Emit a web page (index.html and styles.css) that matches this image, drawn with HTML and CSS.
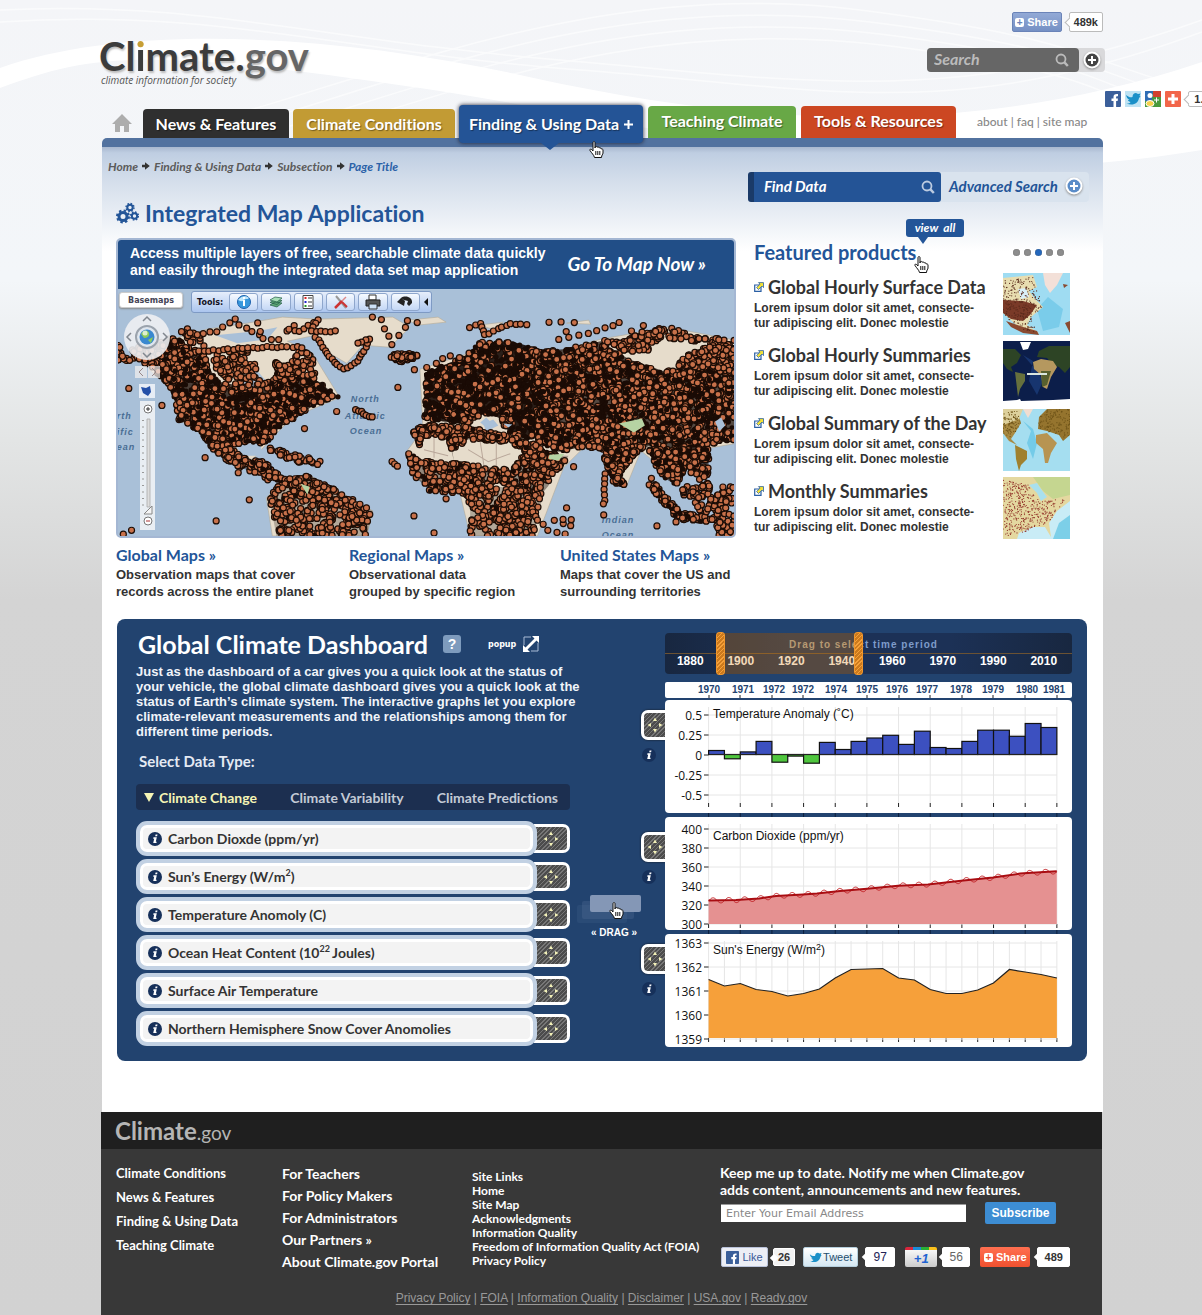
FILE: index.html
```html
<!DOCTYPE html>
<html lang="en">
<head>
<meta charset="utf-8">
<meta name="viewport" content="width=device-width, initial-scale=1">
<title>Climate.gov - Integrated Map Application</title>
<link rel="stylesheet" href="styles.css">
</head>
<body>
<svg class="defs" width="0" height="0" aria-hidden="true">
  <defs>
    <symbol id="hand" viewBox="0 0 15 17"><path d="M4 1.5c0-1.2 2-1.2 2 0V7l.4-1.3c.6-.6 1.7-.3 1.7.6.7-.7 1.9-.3 2 .6.8-.5 2-.1 2 1.1.8-.4 1.9 0 1.9 1v3c0 1.5-1.5 2-1.5 4.500H5.500C5 14 2.500 12 1 9.500c-.6-1.200.8-1.900 1.700-.9L4 10z" fill="#fff" stroke="#111" stroke-width="1"/><path d="M6.800 10v4M8.800 10v4M10.800 10v4" stroke="#111" fill="none"/></symbol>
    <symbol id="lens" viewBox="0 0 14 14"><circle cx="6" cy="6" r="4.500" fill="none" stroke="currentColor" stroke-width="1.800"/><path d="M9.200 9.200 12.800 13" stroke="currentColor" stroke-width="2.500"/></symbol>
    <symbol id="plus-ring" viewBox="0 0 20 20"><circle cx="10" cy="10" r="8.500" fill="#fff"/><circle cx="10" cy="10" r="6.500" fill="currentColor"/><path d="M10 6v8M6 10h8" stroke="#fff" stroke-width="2"/></symbol>
    <symbol id="ext" viewBox="0 0 10 10"><path d="M.7 3h6.300v6.300H.7z" fill="#fff" stroke="#2a5fa4" stroke-width="1.200"/><path d="M4.500.6h5v5L8 4.100 4.500 7.500 2.600 5.600 6 2.100z" fill="#f4e236" stroke="#2a5fa4" stroke-width=".8"/></symbol>
    <symbol id="move" viewBox="0 0 18 18"><path d="M9 1.500 11 5H7zM9 16.500 7 13h4zM1.500 9 5 7v4zM16.500 9 13 11V7z" fill="#f3f1b8"/></symbol>
    <symbol id="crumb" viewBox="0 0 8 8"><path d="M0 2.800h3V.3L7.800 4 3 7.700V5.200H0z" fill="#333"/></symbol>
    <symbol id="info" viewBox="0 0 14 14"><circle cx="7" cy="7" r="7" fill="#16305a"/><path d="M7.600 2.500h1.900l-.4 1.800H7.200zM5.500 5.200h3.300l-1 4.500h.9l-.3 1.400H5.200l1-4.400h-1z" fill="#fff"/></symbol>
    <symbol id="fb" viewBox="0 0 16 16"><rect width="16" height="16" rx="1" fill="#3b5f9a"/><path d="M8.500 16v-6H6.500V7.500h2V6c0-2.200 1.200-3.300 4.500-3v2.300c-1.700-.1-1.900.2-1.900 1.200v1h1.900L12.600 10h-1.500v6z" fill="#fff"/></symbol>
    <symbol id="bird" viewBox="0 0 16 16"><path d="M1 4c3 2.500 5 2.500 6.500 2C7.500 3.500 9 2 11 2l2 1 2.500-.5L14.500 5l1 .5L14 7c-.5 5-6 8.500-12.500 5.500C4 12.500 5 12 5.500 11 3.500 10.500 3 9.500 3 9h1.500C2.500 8 1.500 6 1 4z" fill="#1a90c8"/></symbol>
  </defs>
</svg>
<svg class="waves" viewBox="0 0 1202 220" preserveAspectRatio="none" aria-hidden="true">
  <path d="M0 68C130 22 340 35 520 75S940 150 1202 62V150C900 200 700 130 420 88S90 55 0 88z" fill="#fff"/>
  <g fill="none" stroke="#fff" stroke-width="1.500" opacity=".6">
    <path d="M0 10C200 0 320 40 560 60S950 110 1202 20"/><path d="M0 22C220 8 340 52 580 70S950 125 1202 32"/>
    <path d="M250 110C420 60 620-20 860 10S1100 70 1202 90"/><path d="M270 118C440 66 630-8 870 22S1100 80 1202 102"/>
    <path d="M290 126C460 74 640 4 880 34S1100 92 1202 116"/><path d="M310 134C480 84 650 16 890 46S1100 104 1202 130"/>
  </g>
</svg>

<div class="page">
  <header class="masthead">
    <div class="masthead-top">
      <a class="logo" href="#"><span class="logo-name">Cl<span class="logo-i">i</span>mate.<span class="logo-gov">gov</span></span><span class="tagline">climate information for society</span></a>
      <div class="tools">
        <div class="share-row">
          <button class="share-btn" type="button"><span class="plus-box">+</span>Share</button>
          <span class="count">489k</span>
        </div>
        <form class="site-search">
          <input type="text" placeholder="Search" aria-label="Search the site">
          <button class="lens-btn" type="submit" aria-label="Search"><svg width="14" height="14"><use href="#lens"/></svg></button>
          <button class="more-btn" type="button" aria-label="More options"><svg width="20" height="20"><use href="#plus-ring"/></svg></button>
        </form>
      </div>
      <div class="float-share">
        <a href="#" aria-label="Facebook"><svg width="16" height="16"><use href="#fb"/></svg></a>
        <a href="#" aria-label="Twitter" class="sq-tw"><svg width="16" height="16"><use href="#bird"/></svg></a>
        <a href="#" aria-label="Google"><svg width="16" height="16" viewBox="0 0 16 16"><rect width="16" height="16" fill="#4a9a3c"/><path d="M8 0h8v6H8z" fill="#d2402e"/><path d="M0 0h8l-1 10H0z" fill="#2f6db5"/><circle cx="5" cy="4.500" r="2.500" fill="#fff"/><ellipse cx="5" cy="12.500" rx="4" ry="3" fill="#f7d14a" stroke="#fff"/><path d="M9 9h5M11.500 6.500v5" stroke="#fff"/></svg></a>
        <a href="#" aria-label="Share"><svg width="16" height="16" viewBox="0 0 16 16"><rect width="16" height="16" rx="1" fill="#f2664a"/><path d="M8 3v10M3 8h10" stroke="#fff" stroke-width="3"/></svg></a>
        <span class="count">1.2k</span>
      </div>
    </div>
    <nav class="nav" aria-label="Main">
      <a class="home" href="#" aria-label="Home"><svg width="20" height="18" viewBox="0 0 20 18"><path d="M10 0 20 10h-3v8h-5v-6H8v6H3v-8H0z" fill="#adadad"/></svg></a>
      <a class="tab tab-news" href="#">News &amp; Features</a>
      <a class="tab tab-cond" href="#">Climate Conditions</a>
      <a class="tab tab-data" href="#">Finding &amp; Using Data <svg width="9" height="9" viewBox="0 0 9 9"><path d="M4.500 0v9M0 4.500h9" stroke="#fff" stroke-width="2"/></svg><svg class="pointer" width="15" height="17"><use href="#hand"/></svg></a>
      <a class="tab tab-teach" href="#">Teaching Climate</a>
      <a class="tab tab-tools" href="#">Tools &amp; Resources</a>
      <span class="mini"><a href="#">about</a> | <a href="#">faq</a> | <a href="#">site map</a></span>
    </nav>
  </header>

  <main class="content">
    <div class="columns">
      <section class="map-col">
        <nav class="crumbs" aria-label="Breadcrumb">
          <a href="#">Home</a><svg width="8" height="8"><use href="#crumb"/></svg><a href="#">Finding &amp; Using Data</a><svg width="8" height="8"><use href="#crumb"/></svg><a href="#">Subsection</a><svg width="8" height="8"><use href="#crumb"/></svg><a class="here" href="#">Page Title</a>
        </nav>
        <h1><svg width="23" height="22" viewBox="0 0 23 22" fill="none" stroke="#235598"><circle cx="7" cy="14.500" r="4" stroke-width="3"/><circle cx="7" cy="14.500" r="6" stroke-width="2" stroke-dasharray="2.400 2.300"/><circle cx="14" cy="5.500" r="2.700" stroke-width="2"/><circle cx="14" cy="5.500" r="4" stroke-width="1.400" stroke-dasharray="1.600 1.550"/><circle cx="18.500" cy="14" r="2.700" stroke-width="2"/><circle cx="18.500" cy="14" r="4" stroke-width="1.400" stroke-dasharray="1.600 1.550"/></svg>Integrated Map Application</h1>
        <div class="map-card">
          <div class="map-banner">
            <p>Access multiple layers of free, searchable climate data quickly and easily through the integrated data set map application</p>
            <a href="#">Go To Map Now »</a>
          </div>
          <div class="map-view">
            <svg class="world" viewBox="0 0 616 246" preserveAspectRatio="xMidYMid slice" role="img" aria-label="World map of climate stations">
              <rect width="616" height="246" fill="#a9c0d8"/>
              <g fill="#e6dccb" stroke="#b3aa98" stroke-width=".6">
                <path d="M55 50 90 40 130 34 165 28 200 30 275 28 292 38 272 58 245 56 229 74 212 64 198 46 170 52 195 64 222 108 175 128 155 148 135 170 100 155 62 130 55 100 32 80z"/>
                <path d="M149 208 162 194 189 184 215 198 255 221 249 246H155z"/>
                <path d="M302 80 362 60 440 62 482 50 549 38 616 51V154L592 158 555 188 522 161 507 198 484 161 465 158 445 178 419 246H352L342 204 300 190 290 160 305 140z"/>
                <path d="M290 31 320 28 328 33 300 36zM448 34 470 31 472 35zM360 36 385 33 375 40z"/>
              </g>
              <path d="M120 90 137 78 149 92 140 104 124 96zM118 156 142 152 146 166 126 166zM365 134 375 130 380 136 368 142zM98 46 140 42 160 38 150 50 120 54z" fill="#a9c0d8"/>
              <path d="M306 160 330 166M316 146V168M350 160 370 172 392 164M362 152 366 178M378 150V180" stroke="#b9a79a" fill="none"/>
              <g class="sea-names">
                <text x="233" y="113">North</text><text x="227" y="129">Atlantic</text><text x="232" y="144">Ocean</text>
                <text x="0" y="129">rth</text><text x="0" y="145">ific</text><text x="0" y="160">ean</text>
                <text x="483" y="233">Indian</text><text x="483" y="248">Ocean</text>
              </g>
              <g id="stations">
                <polygon data-shade=".75" data-dots="1300" points="32,56 55,46 84,64 100,92 140,100 158,88 160,74 182,84 200,92 222,108 199,114 178,128 162,138 155,146 150,154 130,152 112,156 96,150 62,130 55,100 40,84"/>
                <polygon data-dots="60" points="0,54 20,56 50,60 50,80 36,78 20,70 0,74"/>
                <polygon data-dots="110" points="62,40 80,38 90,62 130,58 150,96 128,100 110,92 84,66"/>
                <polygon data-dots="60" points="155,70 172,74 182,60 195,66 200,90 180,86 160,84"/>
                <polygon data-shade=".4" data-dots="200" points="79,138 108,150 125,168 150,172 160,184 186,190 184,196 150,190 135,182 112,174 96,160"/>
                <polygon data-dots="40" points="142,156 170,162 206,172 198,176 160,168"/>
                <polygon data-shade=".25" data-dots="330" points="152,208 162,194 189,184 215,198 255,221 249,246 159,246"/>
                <polygon data-shade=".5" data-dots="60" points="272,66 285,63 300,66 290,73 276,72"/>
                <polygon data-shade=".9" data-dots="1100" points="306,84 345,68 362,53 392,52 430,62 440,90 436,120 430,146 410,150 392,144 380,128 366,124 350,134 325,132 305,128 308,110"/>
                <polygon data-shade=".7" data-dots="2100" points="415,62 445,60 469,55 482,52 510,70 545,82 600,78 616,84 616,150 592,154 580,160 555,160 530,156 522,161 505,164 484,160 465,157 440,162 420,152"/>
                <polygon data-dots="130" points="482,50 502,53 522,42 549,38 575,46 616,51 616,60 590,56 565,50 540,50 528,62 510,64"/>
                <polygon data-dots="140" points="555,76 580,58 616,58 616,86 590,80"/>
                <polygon data-shade=".4" data-dots="190" points="294,142 308,134 340,136 392,146 410,152 408,160 390,152 350,150 334,160 336,172 330,148 306,146 302,156"/>
                <polygon data-shade=".4" data-dots="430" points="290,162 300,170 340,174 395,180 404,166 440,164 430,196 420,208 400,206 380,190 352,214 342,204 312,201 294,184"/>
                <polygon data-shade=".25" data-dots="230" points="348,200 372,196 408,200 424,208 419,226 415,246 352,246 352,214"/>
                <polygon data-shade=".3" data-dots="100" points="398,150 420,154 432,166 450,166 444,176 434,186 414,176"/>
                <polygon data-shade=".5" data-dots="160" points="484,158 520,160 502,182 507,196 496,194 488,180"/>
                <polygon data-shade=".6" data-dots="280" points="530,160 590,158 589,186 572,184 566,176 558,196 545,188 536,174"/>
                <polygon data-shade=".5" data-dots="100" points="532,188 544,202 562,222 588,226 588,232 560,230 544,212 530,196"/>
                <polygon data-dots="120" points="560,200 585,184 592,198 616,196 616,246 600,246 590,228 575,216"/>
                <polyline data-step="5" points="82,62 150,58 185,58"/>
                <polyline data-step="8" points="65,42 80,46 100,42 118,30 122,36 142,46"/>
                <polyline data-step="10" points="140,34 146,50 162,50 170,42 176,36"/>
                <polyline data-step="4" points="198,48 206,58 214,70 226,80 240,72 248,58 252,50 240,54"/>
                <polyline data-step="5" points="172,40 182,42 200,30 194,42 218,42"/>
                <polyline data-step="9" points="255,28 264,31 274,55 281,46 288,38 290,31 300,34"/>
                <polyline data-step="5" points="352,38 362,34 366,46 380,40 392,35 408,35"/>
                <polyline data-step="11" points="430,33 455,34 440,50 460,46 478,42 494,36 500,33 512,42 525,36"/>
                <polyline data-step="3" points="238,120 246,124 255,128"/>
                <polyline data-step="5" points="486,184 486,210 484,214"/>
                <polyline data-step="9" points="350,70 332,66 318,74 308,78 296,80"/>
                <polyline data-step="6" points="600,140 604,128 616,120"/>
                <polyline data-step="7" points="419,230 430,240 446,244 452,236 436,230 452,230"/>
                <polyline data-step="4" points="274,172 280,176"/>
                <polyline data-step="40" points="12,99 45,116 88,168 121,183 132,210 99,231 187,139 219,122 280,98 296,226 328,209 316,243 448,218 455,177 485,225 538,236 557,232"/>
                <polyline data-step="6" points="6,244 14,240"/>
              </g>
              <path d="M500 134 523 129 526 136 515 143zM431 165 446 164 440 171 430 169zM183 194 192 197 190 205z" fill="#b6d3a3"/>
              <path d="M362 133 368 128 374 134 368 138zM385 134 394 135 390 138zM596 132 602 128 606 136 600 142z" fill="#a9c0d8"/>
            </svg>
            <button class="basemaps" type="button">Basemaps</button>
            <div class="map-tools">
              <span>Tools:</span>
              <button type="button" aria-label="Identify"><svg width="16" height="16" viewBox="0 0 16 16"><circle cx="8" cy="8" r="6.500" fill="#3797dc" stroke="#1d61ad"/><path d="M2 6c3-4 8-5 11-2-2 2-3 0-5 2s-4 1-6 0z" fill="#bfe6fa"/><path d="M8 6v6M8 3v2" stroke="#fff" stroke-width="2"/></svg></button>
              <button type="button" aria-label="Layers"><svg width="16" height="16" viewBox="0 0 16 16" fill="#5fa777" stroke="#235b45" stroke-width=".7"><path d="m2 11 5-3 7 1-5 4zM2 8.500l5-3 7 1-5 4z"/><path d="m2 6 5-3 7 1-5 4z" fill="#a4ddb4"/></svg></button>
              <button type="button" aria-label="Legend"><svg width="16" height="16" viewBox="0 0 16 16"><path d="M3 1.500h10v13H3z" fill="#fff" stroke="#444"/><path d="M4.500 3h2v2h-2z" fill="#d22"/><path d="M4.500 7h2v2h-2z" fill="#22c"/><path d="M4.500 11h2v2h-2z" fill="#292"/><path d="M8 4h4M8 8h4M8 12h4" stroke="#333"/></svg></button>
              <button type="button" aria-label="Settings"><svg width="16" height="16" viewBox="0 0 16 16" fill="none"><path d="M3 2l10 12" stroke="#999" stroke-width="2"/><path d="M2 14 9 7" stroke="#c33" stroke-width="2.500"/><path d="m9 7 4-4" stroke="#d88" stroke-width="1.500"/><path d="m9 8 5 5" stroke="#c33" stroke-width="2"/></svg></button>
              <button type="button" aria-label="Print"><svg width="16" height="16" viewBox="0 0 16 16"><path d="M4 1h7v5H4z" fill="#fff" stroke="#333"/><path d="M1 6h14v6H1z" fill="#555" stroke="#222"/><path d="M4 10h8v5H4z" fill="#cde0f5" stroke="#333"/></svg></button>
              <button type="button" aria-label="Find"><svg width="18" height="14" viewBox="0 0 18 14"><path d="M1 7 5 3l4 3-1 5zM5 3c4-3 12-1 11 5l-3 3-2-2 1-3-4-1z" fill="#222"/></svg></button>
              <button class="fold" type="button" aria-label="Collapse"><svg width="4" height="8" viewBox="0 0 4 8"><path d="M4 0v8L0 4z" fill="#111"/></svg></button>
            </div>
            <svg class="map-nav" width="56" height="216" viewBox="0 0 56 216" aria-hidden="true">
              <circle cx="26" cy="23" r="23" fill="#eef0f3" opacity=".9"/><circle cx="26" cy="23" r="11" fill="#dfe6ee" stroke="#9ba3ad" stroke-width="2"/>
              <circle cx="26" cy="23" r="7.500" fill="#3a88cf"/><path d="M20 20c3-5 7-4 8-1s-2 5-5 5zM27 26l5-3-2 6z" fill="#8dcb5a"/><circle cx="24" cy="19" r="2.500" fill="#fff" opacity=".7"/>
              <g fill="none" stroke="#81878f" stroke-width="1.500"><path d="m22 7 4-4 4 4M22 39l4 4 4-4M10 19l-4 4 4 4M42 19l4 4-4 4"/></g>
              <path d="M14 52h12v12H14zM27 52h12v12H27z" fill="#f5f1f0" opacity=".7"/><path d="m22 54-4 4 4 4M31 54l4 4-4 4" fill="none" stroke="#988"/>
              <path d="M18 70h16v14H18z" fill="#e7edf5"/><path d="m20 73 5 1 4-2 1 6-3 4-5-3z" fill="#2450a8"/>
              <rect x="19" y="87" width="15" height="129" fill="#eff2f5" opacity=".92"/>
              <circle cx="27" cy="95" r="4" fill="#fff" stroke="#777"/><path d="M27 93v4M25 95h4" stroke="#333"/>
              <path d="M26 105h3v88h-3z" fill="#ddd" stroke="#aaa" stroke-width=".8"/><path d="M22 106v86" stroke="#999" stroke-dasharray="1 5.500" stroke-width="2"/>
              <path d="M31 192v8h-8z" fill="#f5f5f5" stroke="#888"/><circle cx="27" cy="207" r="4" fill="#fff" stroke="#777"/><path d="M25 207h4" stroke="#a33"/>
            </svg>
          </div>
        </div>
        <div class="map-links">
          <div><h3><a href="#">Global Maps »</a></h3><p>Observation maps that cover<br>records across the entire planet</p></div>
          <div><h3><a href="#">Regional Maps »</a></h3><p>Observational data<br>grouped by specific region</p></div>
          <div><h3><a href="#">United States Maps »</a></h3><p>Maps that cover the US and<br>surrounding territories</p></div>
        </div>
      </section>

      <aside class="side-col">
        <form class="find">
          <input type="text" placeholder="Find Data" aria-label="Find data">
          <button class="lens-btn" type="submit" aria-label="Find"><svg width="14" height="14"><use href="#lens"/></svg></button>
          <a href="#">Advanced Search<svg width="20" height="20"><use href="#plus-ring"/></svg></a>
        </form>
        <section class="featured">
          <div class="featured-head">
            <h2>Featured products</h2>
            <a class="view-all" href="#">view&nbsp; all</a>
            <svg class="pointer" width="15" height="17"><use href="#hand"/></svg>
            <div class="pager"><i></i><i></i><i class="on"></i><i></i><i></i></div>
          </div>
          <article class="product">
            <div><h3><svg width="10" height="10"><use href="#ext"/></svg><a href="#">Global Hourly Surface Data</a></h3><p>Lorem ipsum dolor sit amet, consecte-<br>tur adipiscing elit. Donec molestie</p></div>
            <svg class="thumb" width="67" height="62" viewBox="0 0 67 62"><rect width="67" height="62" fill="#9fdcf2"/><path d="M34 36 45 24 60 36 56 54 40 58z" fill="#7accea"/><path d="M0 5 30 2 34 14 26 18 32 26 40 34 28 44 24 52 36 60 20 58 0 40z" fill="#e8ddb0"/><path d="M40 0h20L54 12l-7 8-5-8z" fill="#f3e0d8"/><path d="M15 16l8-1 3 9-8 2z" fill="#d9eff8"/><path d="M0 27 20 28 34 32 27 42 20 48 8 46 0 40z" fill="#7a3a28"/><path d="M3 48 20 54 34 58 36 62 20 60 8 54zM60 11l5 1-4 3zM62 50l5-2v12z" fill="#8a4a30"/><g data-color="#5a2a1c"><polygon data-tiny="1" data-dots="260" points="0,8 30,4 40,34 28,44 36,60 18,56 0,42"/></g></svg>
          </article>
          <article class="product">
            <div><h3><svg width="10" height="10"><use href="#ext"/></svg><a href="#">Global Hourly Summaries</a></h3><p>Lorem ipsum dolor sit amet, consecte-<br>tur adipiscing elit. Donec molestie</p></div>
            <svg class="thumb" width="67" height="62" viewBox="0 0 67 62"><rect width="67" height="62" fill="#0c1e4a"/><path d="M20 14 30 20 26 40 34 54 40 40 34 30z" fill="#17356f"/><path d="M0 8 12 8 18 14 14 22 8 26 10 31 4 28 0 22zM36 10 46 5 67 5V26L62 32 56 26 50 24 44 17 34 16z" fill="#2d4425"/><path d="M17 1h11l-3 7-5 1z" fill="#fff"/><path d="M30 21 38 18 50 20 54 26 48 36 44 48 40 46 38 34 31 28z" fill="#b5985f"/><path d="M38 30h10l-4 14-5 2z" fill="#58602f"/><path d="M12 31 22 33 22 40 17 48 15 56z" fill="#66703d"/><path d="M0 62V60L14 59l3-1 1 2 32-1 17-1v4z" fill="#fff"/><path d="M24 32h20v2H24z" fill="#dce8e0"/></svg>
          </article>
          <article class="product">
            <div><h3><svg width="10" height="10"><use href="#ext"/></svg><a href="#">Global Summary of the Day</a></h3><p>Lorem ipsum dolor sit amet, consecte-<br>tur adipiscing elit. Donec molestie</p></div>
            <svg class="thumb" width="67" height="62" viewBox="0 0 67 62"><rect width="67" height="62" fill="#a5def0"/><path d="M20 12 28 22 24 34 30 50 34 34 30 20z" fill="#74cbe8"/><path d="M0 2 14 2 18 14 12 24 8 30 14 36 6 32 0 24z" fill="#a88a42"/><path d="M0 0h20l-4 10-16 6z" fill="#ddd09c"/><path d="M20 0h10l-5 9z" fill="#f1ddd0"/><path d="M36 8 44 0 67 0V26L60 32 56 26 44 22 35 20z" fill="#95742e"/><path d="M33 26 44 24 54 34 48 44 45 54 42 54 40 40 33 34z" fill="#b79452"/><path d="M12 36 24 42 24 50 18 56 16 62 13 50z" fill="#a0812f"/><g data-color="#6e5318"><polygon data-tiny="1" data-dots="130" points="36,8 44,0 67,0 67,26 60,32 56,26 35,20"/><polygon data-tiny="1" data-dots="90" points="0,2 14,2 18,14 8,30 0,24"/></g></svg>
          </article>
          <article class="product">
            <div><h3><svg width="10" height="10"><use href="#ext"/></svg><a href="#">Monthly Summaries</a></h3><p>Lorem ipsum dolor sit amet, consecte-<br>tur adipiscing elit. Donec molestie</p></div>
            <svg class="thumb" width="67" height="62" viewBox="0 0 67 62"><rect width="67" height="62" fill="#e4d8a0"/><path d="M30 0H67V18L50 22 40 14z" fill="#c5d690"/><path d="M67 24 54 34 46 46 48 60 42 50 30 50 16 56 14 62H67z" fill="#c9ecf6"/><path d="M67 38 56 46 50 62H67z" fill="#7ccfe8"/><path d="M26 8 34 6 38 12 44 20 38 24 34 16z" fill="#a9e0ee"/><g data-color="#94372c"><polygon data-tiny="1" data-dots="420" points="0,2 26,8 36,24 62,22 46,46 30,50 14,60 0,58"/></g></svg>
          </article>
        </section>
      </aside>
    </div>

    <section class="dash">
      <div class="dash-left">
        <div class="dash-title"><h2>Global Climate Dashboard</h2><button class="help" type="button" aria-label="Help">?</button><a class="popup" href="#">popup<svg width="16" height="16" viewBox="0 0 16 16"><path d="M1 9V1h7M15 7v8H8" fill="none" stroke="#a9bcd6"/><path d="M9 0h7v7l-2.500-2.500-9 9L7 16H0V9l2.500 2.500 9-9z" fill="#fff"/></svg></a></div>
        <p class="dash-text">Just as the dashboard of a car gives you a quick look at the status of<br>your vehicle, the global climate dashboard gives you a quick look at the<br>status of Earth’s climate system. The interactive graphs let you explore<br>climate-relevant measurements and the relationships among them for<br>different time periods.</p>
        <h3>Select Data Type:</h3>
        <div class="types"><button class="on" type="button">Climate Change</button><button type="button">Climate Variability</button><button type="button">Climate Predictions</button></div>
        <ul class="data-list">
          <li><div class="pill"><svg width="14" height="14"><use href="#info"/></svg>Carbon Dioxde (ppm/yr)</div><button type="button" aria-label="Move"><svg width="18" height="18"><use href="#move"/></svg></button></li>
          <li><div class="pill"><svg width="14" height="14"><use href="#info"/></svg><span>Sun’s Energy (W/m<sup>2</sup>)</span></div><button type="button" aria-label="Move"><svg width="18" height="18"><use href="#move"/></svg></button></li>
          <li><div class="pill"><svg width="14" height="14"><use href="#info"/></svg>Temperature Anomoly (C)</div><button type="button" aria-label="Move"><svg width="18" height="18"><use href="#move"/></svg></button></li>
          <li><div class="pill"><svg width="14" height="14"><use href="#info"/></svg><span>Ocean Heat Content (10<sup>22 </sup>Joules)</span></div><button type="button" aria-label="Move"><svg width="18" height="18"><use href="#move"/></svg></button></li>
          <li><div class="pill"><svg width="14" height="14"><use href="#info"/></svg>Surface Air Temperature</div><button type="button" aria-label="Move"><svg width="18" height="18"><use href="#move"/></svg></button></li>
          <li><div class="pill"><svg width="14" height="14"><use href="#info"/></svg>Northern Hemisphere Snow Cover Anomolies</div><button type="button" aria-label="Move"><svg width="18" height="18"><use href="#move"/></svg></button></li>
        </ul>
      </div>
      <div class="dash-mid">
        <svg width="64" height="28" viewBox="0 0 64 28" aria-hidden="true"><rect x="0" y="10" width="50" height="18" rx="2" fill="#5f789f" opacity=".15"/><rect x="5" y="6" width="52" height="18" rx="2" fill="#5f789f" opacity=".25"/><rect x="13" y="0" width="51" height="17" rx="2" fill="#8497b6"/><use href="#hand" x="32" y="7" width="15" height="17"/></svg>
        <span>« DRAG »</span>
      </div>
      <div class="dash-right">
        <div class="timeline">
          <span class="hint"><b>Drag to sele</b>ct time period</span>
          <div class="decades"><span>1880</span><span>1900</span><span>1920</span><span>1940</span><span>1960</span><span>1970</span><span>1990</span><span>2010</span></div>
          <div class="range"></div>
          <input type="range" min="0" max="1000" value="128" aria-label="Start year">
          <input type="range" min="0" max="1000" value="475" aria-label="End year">
        </div>
        <svg class="axis" viewBox="0 0 407 16"><rect width="407" height="16" rx="2" fill="#fff"/><g><text x="44" y="11">1970</text><text x="78" y="11">1971</text><text x="109" y="11">1972</text><text x="138" y="11">1972</text><text x="171" y="11">1974</text><text x="202" y="11">1975</text><text x="232" y="11">1976</text><text x="262" y="11">1977</text><text x="296" y="11">1978</text><text x="328" y="11">1979</text><text x="362" y="11">1980</text><text x="389" y="11">1981</text></g><path d="M44 13v3M75 13v3M107 13v3M138 13v3M170 13v3M202 13v3M234 13v3M265 13v3M297 13v3M328 13v3M360 13v3M392 13v3" stroke="#222"/></svg>
        <div class="chart-row">
          <div class="grip"><button type="button" aria-label="Move"><svg width="18" height="18"><use href="#move"/></svg></button><svg width="14" height="14"><use href="#info"/></svg></div>
          <svg class="chart" viewBox="0 0 407 113" data-chart="bars"></svg>
        </div>
        <div class="chart-row">
          <div class="grip grip-low"><button type="button" aria-label="Move"><svg width="18" height="18"><use href="#move"/></svg></button><svg width="14" height="14"><use href="#info"/></svg></div>
          <svg class="chart" viewBox="0 0 407 113" data-chart="co2"></svg>
        </div>
        <div class="chart-row">
          <div class="grip"><button type="button" aria-label="Move"><svg width="18" height="18"><use href="#move"/></svg></button><svg width="14" height="14"><use href="#info"/></svg></div>
          <svg class="chart" viewBox="0 0 407 113" data-chart="sun"></svg>
        </div>
      </div>
    </section>
  </main>

  <footer class="footer">
    <div class="footer-brand"><b>Climate</b>.gov</div>
    <div class="footer-body">
      <div class="footer-cols">
        <ul class="f1"><li><a href="#">Climate Conditions</a></li><li><a href="#">News &amp; Features</a></li><li><a href="#">Finding &amp; Using Data</a></li><li><a href="#">Teaching Climate</a></li></ul>
        <ul class="f2"><li><a href="#">For Teachers</a></li><li><a href="#">For Policy Makers</a></li><li><a href="#">For Administrators</a></li><li><a href="#">Our Partners »</a></li><li><a href="#">About Climate.gov Portal</a></li></ul>
        <ul class="f3"><li><a href="#">Site Links</a></li><li><a href="#">Home</a></li><li><a href="#">Site Map</a></li><li><a href="#">Acknowledgments</a></li><li><a href="#">Information Quality</a></li><li><a href="#">Freedom of Information Quality Act (FOIA)</a></li><li><a href="#">Privacy Policy</a></li></ul>
        <div class="f4">
          <form class="subscribe">
            <label for="email">Keep me up to date. Notify me when Climate.gov<br>adds content, announcements and new features.</label>
            <div><input id="email" type="email" placeholder="Enter Your Email Address"><button type="submit">Subscribe</button></div>
          </form>
          <div class="social">
            <button class="like" type="button"><svg width="13" height="13"><use href="#fb"/></svg>Like</button><span class="count c-like">26</span>
            <button class="tweet" type="button"><svg width="13" height="13"><use href="#bird"/></svg>Tweet</button><span class="count c-tweet">97</span>
            <button class="plus1" type="button">+1</button><span class="count c-plus">56</span>
            <button class="share-red" type="button"><span class="plus-box">+</span>Share</button><span class="count">489</span>
          </div>
        </div>
      </div>
      <nav class="legal" aria-label="Legal"><a href="#">Privacy Policy</a> | <a href="#">FOIA</a> | <a href="#">Information Quality</a> | <a href="#">Disclaimer</a> | <a href="#">USA.gov</a> | <a href="#">Ready.gov</a></nav>
    </div>
  </footer>
</div>
<script src="script.js"></script>
</body>
</html>
```
FILE: styles.css
```css
* { box-sizing: border-box; }
body { margin: 0; min-height: 100vh; overflow-x: hidden; position: relative; font-family: "Liberation Sans", Arial, sans-serif; font-size: 13px; font-variant-ligatures: none; color: #333; background: linear-gradient(#f4f5f8 0, #f3f6f9 280px, #e3e5e5 440px, #d4d4d4 600px, #d2d2d2 100%); }
h1, h2, h3, p, ul { margin: 0; padding: 0; }
ul { list-style: none; }
a { color: inherit; text-decoration: none; }
button, input { font: inherit; color: inherit; border: 0; padding: 0; margin: 0; background: none; }
svg { display: block; flex: none; }
.defs { position: absolute; }
.waves { position: absolute; top: 0; left: 0; width: 100%; height: 220px; z-index: -1; }
.page { margin: 0 99px 0 101px; min-height: 100vh; display: flex; flex-direction: column; }
.logo, .nav, h1, h2, h3, .site-search, .find, .types, .data-list, .footer-brand, .footer-cols, .crumbs, .map-banner a, .view-all { font-family: Lato, sans-serif; }

.masthead-top { position: relative; display: flex; justify-content: space-between; height: 105px; }
.logo { display: flex; flex-direction: column; padding-top: 32px; }
.logo-name { margin-left: -2px; font-size: 40px; line-height: 48px; font-weight: 700; color: #3c3c3c; text-shadow: 1px 2px 2px #bbb; }
.logo-i { background: linear-gradient(#c79f35 17px, #3c3c3c 17px) no-repeat; background-clip: text; -webkit-background-clip: text; color: transparent; text-shadow: none; }
.logo-gov { color: #666; }
.tagline { font: italic 10px/12px "Open Sans", sans-serif; color: #555; margin-top: -6px; }
.tools { display: flex; flex-direction: column; align-items: flex-end; gap: 16px; padding: 12px 0 0; }
.share-row { display: flex; gap: 7px; }
.share-btn { width: 50px; height: 20px; border: 1px solid #6a83b8; border-radius: 2px; background: linear-gradient(#92a9d6, #7590c4); color: #fff; font-size: 11px; font-weight: 700; display: flex; align-items: center; justify-content: center; gap: 3px; }
.plus-box { width: 9px; height: 9px; background: #fff; border-radius: 2px; color: #6a83b8; font-size: 10px; line-height: 9px; text-align: center; }
.count { position: relative; min-width: 34px; height: 20px; padding: 0 4px; border: 1px solid #bbb; border-radius: 2px; background: #fff; color: #333; font-size: 11px; line-height: 18px; font-weight: 700; text-align: center; }
.count::before { content: ""; position: absolute; left: -4px; top: 6px; width: 6px; height: 6px; background: #fff; border: solid #bbb; border-width: 0 0 1px 1px; transform: rotate(45deg); }
.site-search { display: flex; align-items: center; width: 178px; height: 24px; margin-right: -2px; background: #d9d9db; border-radius: 4px; }
.site-search input { flex: 1; min-width: 0; height: 24px; padding: 0 0 3px 7px; background: #666; border-radius: 4px 0 0 4px; font-size: 16px; font-style: italic; font-weight: 700; }
.site-search input::placeholder { color: #bbb; opacity: 1; }
.lens-btn { display: flex; align-items: center; justify-content: center; }
.site-search .lens-btn { width: 34px; height: 24px; background: #666; color: #bbb; border-radius: 0 4px 4px 0; }
.more-btn { width: 26px; display: flex; justify-content: center; color: #444; }
.more-btn svg, .find a svg { filter: drop-shadow(0 1px 1px #888); }
.float-share { position: absolute; top: 91px; left: calc(100% + 2px); display: flex; gap: 4px; }
.sq-tw { background: #bfe3f3; }
.float-share .count { height: 16px; line-height: 14px; margin-left: 3px; }
.float-share .count::before { top: 4px; }

.nav { display: flex; align-items: flex-end; height: 33px; padding-left: 11px; font-size: 16px; font-weight: 700; color: #fff; position: relative; z-index: 2; }
.home { width: 31px; padding-bottom: 6px; }
.tab { height: 29px; line-height: 30px; text-align: center; border-radius: 4px 4px 0 0; text-shadow: 1px 1px 1px rgba(0,0,0,.4); white-space: nowrap; }
.tab-news { width: 146px; background: #2f2f2f; margin-right: 4px; }
.tab-cond { width: 162px; background: #c29b34; margin-right: 4px; }
.tab-data { position: relative; display: flex; align-items: center; justify-content: center; gap: 5px; width: 184px; height: 38px; background: #245496; border-radius: 4px; margin: 0 5px -5px 0; box-shadow: 0 0 4px #223; }
.tab-data::after { content: ""; position: absolute; left: 82px; top: 38px; border: 9px solid transparent; border-top: 7px solid #245496; border-bottom: 0; }
.tab-data .pointer { position: absolute; left: 130px; top: 36px; z-index: 2; }
.tab-teach { width: 148px; height: 32px; background: #68a846; margin-right: 5px; }
.tab-tools { width: 155px; height: 32px; background: #cc4722; margin-right: 21px; }
.mini { font-size: 12px; font-weight: 500; line-height: 32px; color: #888; white-space: nowrap; }

.content { margin-left: 1px; border-top: 9px solid #52729f; border-radius: 5px 5px 0 0; padding-bottom: 51px; background: linear-gradient(#a9b8cf 0, #bfcee2 6px, #d4deeb 34px, #fff 104px); }
.columns { display: grid; grid-template-columns: minmax(0, 620fr) minmax(0, 341fr); gap: 12px; padding: 0 14px; }
.crumbs { display: flex; align-items: center; gap: 4px; margin: 9px 0 0 -8px; height: 20px; font-size: 12px; font-style: italic; font-weight: 700; color: #5b5b5b; }
.crumbs .here { color: #2b62a8; }
h1 { display: flex; align-items: center; gap: 6px; margin: 22px 0 10px; height: 30px; font-size: 23px; color: #235598; }
.map-card { border: 2px solid #a4b7d3; border-radius: 5px; overflow: hidden; }
.map-banner { display: flex; align-items: center; justify-content: space-between; gap: 10px; height: 49px; padding: 0 28px 0 12px; background: #214e87; color: #fff; }
.map-banner p { font-size: 14px; line-height: 17px; font-weight: 700; padding-bottom: 5px; max-width: 420px; }
.map-banner a { font-size: 19px; font-style: italic; font-weight: 700; white-space: nowrap; padding-bottom: 3px; }
.map-view { position: relative; height: 247px; background: #a9c0d8; }
.world { width: 100%; height: 100%; }
.sea-names text { font: italic 700 9px "Liberation Sans", sans-serif; letter-spacing: 1px; fill: #4a6e94; }
.basemaps { position: absolute; left: 1px; top: 3px; width: 64px; height: 16px; background: #fff; border: 1px solid #ccc; border-radius: 3px; box-shadow: 0 1px 2px #888; font: 700 8px "DejaVu Sans", sans-serif; color: #445; }
.map-tools { position: absolute; left: 73px; top: 2px; display: flex; align-items: center; gap: 3px; width: 241px; height: 22px; padding: 0 3px 0 5px; background: linear-gradient(#e6eefb, #abc5ee); border: 1px solid #7e9ac4; border-radius: 3px; font: 700 8px "DejaVu Sans", sans-serif; color: #112; }
.map-tools span { margin-right: 3px; }
.map-tools button { width: 30px; height: 18px; display: flex; align-items: center; justify-content: center; border: 1px solid #8ea6cc; border-radius: 3px; background: linear-gradient(#f6faff, #c4d7f5); }
.map-tools .fold { width: 5px; border: 0; background: none; }
.map-nav { position: absolute; left: 3px; top: 25px; }
.map-links { display: grid; grid-template-columns: 233fr 211fr 176fr; margin-top: 8px; }
.map-links h3 { font-size: 16px; line-height: 18px; color: #235598; white-space: nowrap; }
.map-links p { font-size: 13px; line-height: 17px; font-weight: 700; margin-top: 2px; white-space: nowrap; }

.find { display: flex; align-items: center; height: 30px; margin-top: 25px; border-radius: 4px; background: #d9e3ee; }
.find input { width: 166px; height: 30px; border-left: 6px solid #1a3a68; padding: 0 0 3px 10px; border-radius: 3px 0 0 3px; background: #245496; font-size: 15px; font-style: italic; font-weight: 700; }
.find input::placeholder { color: #fff; opacity: 1; }
.find .lens-btn { width: 27px; height: 30px; background: #245496; color: #bccbe0; border-radius: 0 3px 3px 0; }
.find a { display: flex; align-items: center; gap: 6px; height: 30px; padding-bottom: 3px; margin-left: 8px; font-size: 15px; font-style: italic; font-weight: 700; color: #235598; white-space: nowrap; }
.find a svg { color: #5a8cc8; }
.featured { padding: 36px 19px 0 6px; }
.featured-head { position: relative; display: flex; align-items: center; justify-content: space-between; height: 28px; margin-bottom: 7px; padding-right: 6px; }
.featured h2 { font-size: 20px; color: #235598; white-space: nowrap; }
.view-all { position: absolute; left: 152px; top: -19px; width: 58px; height: 18px; background: #235598; border-radius: 3px; color: #fff; font-size: 12px; line-height: 17px; font-style: italic; font-weight: 700; text-align: center; }
.view-all::after { content: ""; position: absolute; left: 12px; top: 18px; border: 5px solid transparent; border-top: 7px solid #235598; border-bottom: 0; }
.featured .pointer { position: absolute; left: 160px; top: 18px; }
.pager { display: flex; gap: 4px; }
.pager i { width: 7px; height: 7px; border-radius: 50%; background: #8d8d8d; box-shadow: inset 0 0 1px #555; }
.pager .on { background: #2468bd; }
.product { display: flex; justify-content: space-between; margin-bottom: 6px; }
.product h3 { display: flex; align-items: center; gap: 4px; font-size: 18px; line-height: 28px; white-space: nowrap; }
.product p { font-size: 12px; line-height: 15px; font-weight: 700; white-space: nowrap; }

.dash { display: grid; grid-template-columns: minmax(0, 434fr) minmax(0, 71fr) minmax(0, 431fr); margin: 19px 16px 0 15px; padding: 11px 15px 14px 19px; border-radius: 8px; background: #22436f; color: #fff; }
.dash-title { display: flex; align-items: center; height: 28px; }
.dash-title h2 { font-size: 25px; white-space: nowrap; margin-left: 2px; }
.help { width: 18px; height: 18px; margin-left: 15px; border-radius: 3px; background: #7e9bbd; font-size: 14px; font-weight: 700; }
.popup { display: flex; align-items: center; gap: 7px; margin-left: 27px; font: 700 8px "DejaVu Sans", sans-serif; }
.dash-text { margin-top: 6px; font-size: 13px; line-height: 15px; font-weight: 700; white-space: nowrap; color: #f0f4fa; }
.dash h3 { margin: 12px 0 13px 3px; font-size: 15px; line-height: 20px; color: #e4eaf3; }
.types { display: flex; align-items: center; justify-content: space-between; height: 26px; padding: 0 12px 0 8px; border-radius: 4px; background: #1c2f50; font-size: 14px; font-weight: 700; color: #c3cad6; }
.types .on { color: #f6f5b5; display: flex; align-items: center; gap: 5px; }
.types .on::before { content: ""; border: 5px solid transparent; border-top: 9px solid #f6f5b5; border-bottom: 0; }
.data-list { display: grid; gap: 3px; margin-top: 11px; }
.data-list li { display: flex; align-items: center; height: 35px; }
.pill { position: relative; z-index: 1; display: flex; align-items: center; flex: 1; height: 35px; padding-left: 8px; border: 4px solid #c2d1e3; border-radius: 11px; background: #f3f3f3; box-shadow: inset 0 0 0 3px #fff; color: #333; font-size: 14px; font-weight: 700; margin-right: -3px; }
.pill svg { margin-right: 6px; }
.pill sup { font-size: 9px; line-height: 9px; }
.data-list button, .grip button { display: flex; align-items: center; justify-content: center; height: 29px; border: 3px solid #fff; background: repeating-linear-gradient(135deg, #777 0 1px, #4c4c4c 1px 3px); }
.data-list button { width: 36px; border-left: 0; border-radius: 0 7px 7px 0; }
.dash-mid { display: flex; flex-direction: column; align-items: flex-end; padding-top: 265px; font-size: 10px; font-weight: 700; }
.dash-mid span { margin: 4px 4px 0 0; }
.dash-right { padding-top: 3px; }
.timeline { position: relative; height: 41px; margin-left: 24px; border-radius: 4px; background: linear-gradient(transparent 20px, #6b5233 20px 21px, transparent 21px), linear-gradient(90deg, #182740, #1c3156 30%, #1c3156 70%, #182740); text-align: center; }
.hint { display: block; padding-top: 6px; line-height: 12px; font-size: 10px; font-weight: 700; letter-spacing: 1px; color: #7f9cca; margin-right: 10px; }
.hint b { color: #a7a49c; }
.decades { display: grid; grid-template-columns: repeat(8, 1fr); padding: 4px 3px 0 0; font-size: 12px; line-height: 13px; font-weight: 700; }
.range { position: absolute; left: 14%; top: 0; width: 34%; height: 41px; background: rgba(220, 130, 20, .3); }
.timeline input { position: absolute; left: 0; top: -1px; width: 100%; height: 43px; appearance: none; -webkit-appearance: none; pointer-events: none; }
.timeline input::-webkit-slider-thumb { -webkit-appearance: none; pointer-events: auto; width: 9px; height: 43px; border-radius: 3px; background: repeating-linear-gradient(135deg, #f6a13a 0 1px, #cc7a1d 1px 3px); border: 1px solid #f0962c; }
.axis { width: calc(100% - 24px); height: auto; margin: 8px 0 2px 24px; }
.axis text { font: 700 10px "Liberation Sans", sans-serif; fill: #24436f; text-anchor: middle; }
.chart-row { display: grid; grid-template-columns: 24px minmax(0, 1fr); margin-bottom: 4px; }
.chart-row:last-child { margin-bottom: 0; }
.grip { padding-top: 10px; }
.grip-low { padding-top: 15px; }
.grip button { width: 24px; height: 30px; border-right: 0; border-radius: 7px 0 0 7px; margin-bottom: 8px; box-shadow: 0 0 2px #111; }
.grip > svg { margin-left: 1px; }
.chart { width: 100%; height: auto; background: #fff; border-radius: 4px; overflow: visible; }
.chart text { font: 12px "Liberation Sans", sans-serif; fill: #111; }
.chart .tick { font: 12px "Open Sans", sans-serif; text-anchor: end; }
.chart .pow { font-size: 9px; }

.footer { flex: 1; background: #383838; color: #fff; margin-right: 1px; }
.footer-brand { height: 37px; padding-left: 14px; background: #1f1f1f; color: #b5b5b5; font-size: 19px; line-height: 37px; }
.footer-brand b { font-size: 24px; font-weight: 700; }
.footer-cols { display: grid; grid-template-columns: 166fr 190fr 248fr 382fr; padding: 12px 0 0 15px; height: 141px; font-size: 14px; font-weight: 700; white-space: nowrap; }
.f1 { font-size: 13px; }
.f1 li { height: 24px; line-height: 24px; }
.f2 { padding-top: 1px; }
.f2 li { height: 22px; line-height: 24px; }
.f3 { padding-top: 9px; font-size: 12px; }
.f3 li { height: 14px; line-height: 14px; }
.subscribe label { display: block; line-height: 17px; padding-top: 3px; }
.subscribe div { display: flex; align-items: center; gap: 19px; margin: 4px 0 0 1px; }
.subscribe input { width: 245px; height: 18px; padding-left: 5px; background: #fff; border-top: 1px solid #999; font: 11px "DejaVu Sans", sans-serif; }
.subscribe input::placeholder { color: #888; opacity: 1; }
.subscribe button { width: 71px; height: 22px; border-radius: 2px; background: #3d8dd3; font: 700 12px "Liberation Sans", sans-serif; }
.social { display: flex; align-items: center; margin: 23px 0 0 1px; font-family: "Liberation Sans", sans-serif; font-weight: 400; }
.social button { height: 20px; display: flex; align-items: center; justify-content: center; gap: 3px; border-radius: 2px; font-size: 11px; }
.like { width: 47px; background: #eceef5; border: 1px solid #b9c2da; color: #3b5998; }
.social .tweet { width: 55px; margin-left: 8px; gap: 1px; background: linear-gradient(#fff, #d5e8f3); border: 1px solid #b6cfdd; color: #1f4e6e; }
.social .plus1 { width: 32px; margin-left: 10px; padding-top: 3px; background: linear-gradient(90deg, #d9263c 25%, #1a8cd8 25% 50%, #29b035 50% 75%, #fbc11c 75%) 0 0 / 100% 3px no-repeat, linear-gradient(#fff, #ccc); color: #1e63d2; font-size: 13px; font-weight: 700; font-style: italic; }
.share-red { width: 50px; margin-left: 10px; background: linear-gradient(#ff6f50, #f0512f); color: #fff; font-weight: 700; }
.share-red .plus-box { color: #f0512f; }
.social .count { min-width: 33px; margin-left: 7px; border-color: #fff; }
.social .count::before { border: 0; left: -3px; }
.social .c-like { min-width: 22px; height: 18px; line-height: 17px; margin-left: 5px; background: #f2f2f2; }
.social .c-tweet { min-width: 30px; font-size: 12px; font-weight: 400; color: #225; }
.social .c-plus { min-width: 28px; font-size: 12px; font-weight: 400; color: #666; margin-left: 5px; }
.legal { text-align: center; padding-bottom: 8px; font-size: 12px; line-height: 16px; color: #999; }
.legal a { text-decoration: underline; text-underline-offset: 2px; }
```
FILE: script.js
```js
(() => {
  const NS = "http://www.w3.org/2000/svg";
  let seed = 7;
  const rnd = () => (seed = (seed * 16807) % 2147483647) / 2147483647;

  function add(parent, name, attrs, text) {
    const el = document.createElementNS(NS, name);
    for (const key in attrs) el.setAttribute(key, attrs[key]);
    if (text) el.textContent = text;
    parent.appendChild(el);
    return el;
  }

  const parse = (el) => el.getAttribute("points").trim().split(/\s+/).map((p) => p.split(",").map(Number));

  function inside(x, y, pts) {
    let hit = false;
    for (let i = 0, j = pts.length - 1; i < pts.length; j = i++) {
      const [xi, yi] = pts[i], [xj, yj] = pts[j];
      if (yi > y !== yj > y && x < ((xj - xi) * (y - yi)) / (yj - yi) + xi) hit = !hit;
    }
    return hit;
  }

  function fillPoints(pts, count) {
    const xs = pts.map((p) => p[0]), ys = pts.map((p) => p[1]);
    const x0 = Math.min(...xs), x1 = Math.max(...xs), y0 = Math.min(...ys), y1 = Math.max(...ys);
    const out = [];
    while (out.length < count) {
      const x = x0 + rnd() * (x1 - x0), y = y0 + rnd() * (y1 - y0);
      if (inside(x, y, pts)) out.push([x.toFixed(1), y.toFixed(1)]);
    }
    return out;
  }

  const stations = document.getElementById("stations");
  const marker = { r: 3, fill: "#c8714a", stroke: "#1c0d06", "stroke-width": 1.2 };
  const clump = { r: 2.6, fill: "#1a0b05" };
  stations.querySelectorAll("polygon").forEach((poly) => {
    const shade = +(poly.dataset.shade || 0);
    poly.setAttribute("fill", "#160a05");
    poly.setAttribute("fill-opacity", shade);
    fillPoints(parse(poly), +poly.dataset.dots).forEach(([cx, cy]) => {
      const dark = rnd() < shade - 0.22;
      add(stations, "circle", { cx, cy, ...(dark ? clump : marker) });
    });
  });
  stations.querySelectorAll("polyline").forEach((line) => {
    line.setAttribute("fill", "none");
    const pts = parse(line), step = +line.dataset.step;
    const single = step >= 40, jitter = single ? 0 : 1.5;
    pts.forEach(([x, y], i) => {
      const [nx, ny] = pts[i + 1] || [x, y];
      const n = single ? 1 : Math.max(1, Math.round(Math.hypot(nx - x, ny - y) / step));
      for (let k = 0; k < n; k++) {
        add(stations, "circle", {
          cx: x + ((nx - x) * k) / n + (rnd() - 0.5) * jitter,
          cy: y + ((ny - y) * k) / n + (rnd() - 0.5) * jitter,
          ...marker,
        });
      }
    });
  });
  document.querySelectorAll("polygon[data-tiny]").forEach((poly) => {
    poly.setAttribute("fill", "none");
    const g = poly.parentNode;
    fillPoints(parse(poly), +poly.dataset.dots).forEach(([cx, cy]) => add(g, "circle", { cx, cy, r: 0.6, fill: g.dataset.color }));
  });

  /* Dashboard charts */
  const X = (i) => 43.6 + 15.83 * i;
  const GRID = { stroke: "#e6e6e6" }, INK = { stroke: "#222" };
  const chart = (name) => document.querySelector(`[data-chart="${name}"]`);

  function frame(svg, labels, ys, every, bottom, linked) {
    for (let i = 0; i <= 22; i += every) {
      add(svg, "path", { d: `M${X(i)} 7V${bottom}`, ...GRID });
      add(svg, "path", { d: `M${X(i)} ${bottom}v4`, ...INK });
    }
    if (linked) for (let i = 0; i <= 22; i += 2) add(svg, "path", { d: `M${X(i)} 113v4`, stroke: "#0d1f3c" });
    ys.forEach((y, i) => {
      add(svg, "path", { d: `M43.6 ${y}H391.8`, ...GRID });
      add(svg, "path", { d: `M39 ${y}h4.6`, ...INK });
      add(svg, "text", { x: 37, y: y + 5, class: "tick" }, labels[i]);
    });
  }
  function heading(svg, y, title, pow) {
    const t = add(svg, "text", { x: 48, y }, title);
    if (pow) {
      add(t, "tspan", { class: "pow", dy: -4 }, pow);
      add(t, "tspan", { dy: 4 }, ")");
    }
  }

  const bars = chart("bars");
  frame(bars, ["0.5", "0.25", "0", "-0.25", "-0.5"], [15, 35, 55, 75, 95], 2, 103, true);
  [51.5, 59.3, 52.9, 42.4, 62.7, 56.6, 63.7, 43.4, 50.5, 42.4, 39, 36.3, 45.4, 32.2, 48.5, 49.5, 42.4, 31.2, 31.2, 37.3, 24.5, 28.5].forEach((y, i) => {
    const up = y < 55;
    add(bars, "rect", { x: X(i), width: 15.83, y: up ? y - 1 : 54.5, height: up ? 55.5 - y : y - 55, fill: up ? "#3c50c0" : "#4fc63e", stroke: "#111", "stroke-width": 1.2 });
  });
  add(bars, "path", { d: "M43.6 54.5H391.8", ...INK });
  heading(bars, 18, "Temperature Anomaly (˚C)");

  const co2 = chart("co2");
  frame(co2, ["400", "380", "360", "340", "320", "300"], [12, 31, 50, 69, 88, 107], 2, 107, true);
  const trend = [[43.6, 83.5], [71, 83], [94, 81.5], [111, 79], [138, 77.5], [152, 76.5], [175, 74], [202, 71.8], [233, 68.7], [263, 67.4], [296, 63.7], [328, 60.6], [355, 56.6], [371, 55.6], [391.8, 54.2]];
  const level = (x) => {
    let i = 1;
    while (i < trend.length - 1 && trend[i][0] < x) i++;
    const [a, b] = trend[i - 1], [c, d] = trend[i];
    return b + ((d - b) * (x - a)) / (c - a);
  };
  const trendPath = trend.map((p) => p.join(" ")).join("L");
  let wave = "";
  for (let x = 43.6; x <= 391.8; x += 1) wave += `${wave ? "L" : "M"}${x.toFixed(1)} ${(level(x) - 2.6 * Math.sin(((x - 44) / 15.83) * 2 * Math.PI)).toFixed(1)}`;
  add(co2, "path", { d: `M43.6 107L${trendPath}V107z`, fill: "#e59191" });
  add(co2, "path", { d: wave, fill: "none", stroke: "#c22226", "stroke-width": 1 });
  add(co2, "path", { d: `M${trendPath}`, fill: "none", stroke: "#a90d12", "stroke-width": 2 });
  heading(co2, 23, "Carbon Dioxide (ppm/yr)");

  const sun = chart("sun");
  frame(sun, ["1363", "1362", "1361", "1360", "1359"], [9, 33, 57, 81, 105], 1, 104, false);
  const energy = [45.5, 52, 49.5, 55.5, 57.5, 62, 59.5, 55, 44, 35.5, 35, 34.5, 44, 46, 55.5, 59.5, 59.5, 56, 49, 35.5, 38, 40.5, 44];
  const ridge = energy.map((y, i) => `${X(i).toFixed(1)} ${y}`).join("L");
  add(sun, "path", { d: `M43.6 104L${ridge}V104z`, fill: "#f6a03a" });
  add(sun, "path", { d: `M${ridge}`, fill: "none", stroke: "#222", "stroke-width": 1.2 });
  heading(sun, 20, "Sun's Energy (W/m", "2");
})();
```
